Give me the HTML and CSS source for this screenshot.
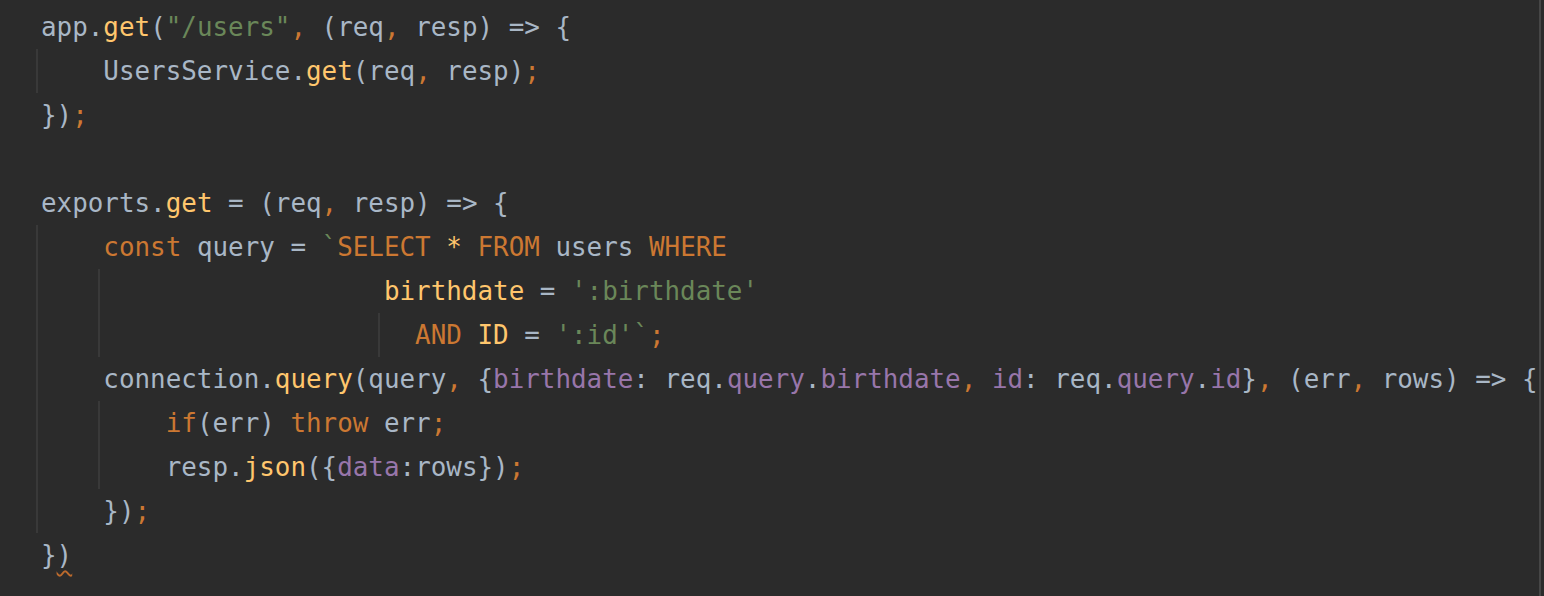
FILE: index.html
```html
<!DOCTYPE html>
<html>
<head>
<meta charset="utf-8">
<link rel="stylesheet" href="styles.css">
</head>
<body>
<div class="editor">
<div class="line">app.<span class="fn">get</span>(<span class="str">"/users"</span><span class="kw">,</span> (req<span class="kw">,</span> resp) =&gt; {</div>
<div class="line g0">    UsersService.<span class="fn">get</span>(req<span class="kw">,</span> resp)<span class="kw">;</span></div>
<div class="line">})<span class="kw">;</span></div>
<div class="line"> </div>
<div class="line">exports.<span class="fn">get</span> = (req<span class="kw">,</span> resp) =&gt; {</div>
<div class="line g0">    <span class="kw">const</span> query = <span class="str">`</span><span class="kw">SELECT</span> <span class="fn">*</span> <span class="kw">FROM</span> users <span class="kw">WHERE</span></div>
<div class="line g0 g1">                      <span class="fn">birthdate</span> = <span class="str">':birthdate'</span></div>
<div class="line g0 g1 g22">                        <span class="kw">AND</span> <span class="fn">ID</span> = <span class="str">':id'`</span><span class="kw">;</span></div>
<div class="line g0">    connection.<span class="fn">query</span>(query<span class="kw">,</span> {<span class="prop">birthdate</span>: req.<span class="prop">query</span>.<span class="prop">birthdate</span><span class="kw">,</span> <span class="prop">id</span>: req.<span class="prop">query</span>.<span class="prop">id</span>}<span class="kw">,</span> (err<span class="kw">,</span> rows) =&gt; {</div>
<div class="line g0 g1">        <span class="kw">if</span>(err) <span class="kw">throw</span> err<span class="kw">;</span></div>
<div class="line g0 g1">        resp.<span class="fn">json</span>({<span class="prop">data</span>:rows})<span class="kw">;</span></div>
<div class="line g0">    })<span class="kw">;</span></div>
<div class="line">}<span class="warn">)</span></div>
</div>
</body>
</html>
```

FILE: styles.css
```css
html, body {
  margin: 0;
  padding: 0;
  background: #2b2b2b;
}

.editor {
  box-sizing: border-box;
  width: 1541px;
  height: 596px;
  padding-top: 5px;
  border-right: 2px solid #464646;
  overflow: hidden;
  font-family: "DejaVu Sans Mono", "Liberation Mono", monospace;
  font-size: 25.9px;
  color: #a9b7c6;
}

.line {
  height: 44px;
  line-height: 44px;
  padding-left: 41px;
  white-space: pre;
  background-repeat: no-repeat;
}

.g0 {
  background-image: linear-gradient(#393939, #393939);
  background-size: 2px 100%;
  background-position: 36px 0;
}

.g0.g1 {
  background-image: linear-gradient(#393939, #393939), linear-gradient(#393939, #393939);
  background-size: 2px 100%, 2px 100%;
  background-position: 36px 0, 98px 0;
}

.g0.g1.g22 {
  background-image: linear-gradient(#393939, #393939), linear-gradient(#393939, #393939), linear-gradient(#393939, #393939);
  background-size: 2px 100%, 2px 100%, 2px 100%;
  background-position: 36px 0, 98px 0, 378px 0;
}

.fn { color: #ffc66d; }
.kw { color: #cc7832; }
.str { color: #6a8759; }
.prop { color: #9876aa; }

.warn {
  text-decoration-line: underline;
  text-decoration-style: wavy;
  text-decoration-color: #bc6a2c;
  text-decoration-thickness: 1.5px;
  text-underline-offset: 6px;
}
```
